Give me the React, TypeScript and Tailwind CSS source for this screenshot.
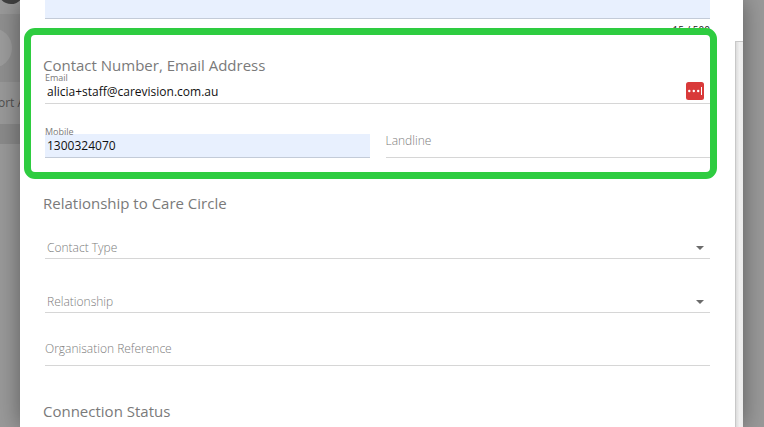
import type { ReactNode } from 'react'

const fieldClass =
  'block w-full rounded-none border-b border-[#d6d6d6] bg-transparent font-[inherit] text-[12px] text-[#111] outline-none placeholder:font-light placeholder:text-[#7c7c7c]'

const SectionTitle = ({ children }: { children: ReactNode }) => (
  <h2 className="-ml-0.5 text-[15px] leading-[15px] text-[#7a7a7a]">{children}</h2>
)

const FloatingLabel = ({ htmlFor, children }: { htmlFor: string; children: ReactNode }) => (
  <label
    htmlFor={htmlFor}
    className="relative -mb-0.5 block text-[9px] leading-[9px] text-[#7a7a7a]"
  >
    {children}
  </label>
)

const PasswordManagerIcon = () => (
  <svg viewBox="0 0 18 18" className="h-[18px] w-[18px]" aria-hidden="true">
    <rect width="18" height="18" rx="2.5" fill="#d93a3a" />
    <circle cx="3.3" cy="9" r="1.2" fill="#fff" />
    <circle cx="7.8" cy="9" r="1.2" fill="#fff" />
    <circle cx="12.2" cy="9" r="1.2" fill="#fff" />
    <rect x="15" y="5" width="1" height="8" fill="#fff" />
  </svg>
)

const SelectField = ({ id, label }: { id: string; label: string }) => (
  <div className="relative">
    <select
      id={id}
      aria-label={label}
      defaultValue=""
      className="block h-6 w-full appearance-none rounded-none border-b border-[#d6d6d6] bg-transparent pt-0.5 pl-0.5 font-[inherit] text-[12px] font-light text-[#7c7c7c] outline-none"
    >
      <option value="">{label}</option>
    </select>
    <svg
      viewBox="0 0 8 4"
      className="pointer-events-none absolute top-[11px] right-1.5 h-1 w-2"
      aria-hidden="true"
    >
      <path d="M0 0h8L4 4z" fill="#6b6b6b" />
    </svg>
  </div>
)

// Dimmed page behind the dialog
const Backdrop = () => (
  <div className="w-5 shrink-0 overflow-hidden bg-[#999] text-[12px] text-[#505050]">
    <div className="h-3.5 overflow-hidden">
      <div className="-mt-[22px] -ml-0.5 h-[26px] w-[26px] rounded-full bg-[#404040]" />
    </div>
    <div className="flex h-[68px] items-center bg-[#8f8f8f]">
      <div className="-ml-7 h-10 w-10 shrink-0 rounded-full bg-[#9c9c9c]" />
    </div>
    <div className="flex h-[42px] items-center whitespace-nowrap">
      <span className="-ml-0.5">ort A</span>
    </div>
    <div className="h-5 bg-[#8a8a8a]" />
  </div>
)

const App = () => {
  return (
    <div className="flex h-screen overflow-hidden bg-[#999] font-['Open_Sans','Noto_Sans',sans-serif]">
      <Backdrop />
      <main className="relative flex min-w-0 flex-1 bg-white shadow-[0_0_22px_rgba(0,0,0,0.4)]">
        <form className="min-w-0 flex-1 px-[25px]">
          <textarea
            aria-label="Notes"
            className="block h-[19px] w-full resize-none border-b border-[#c3cbd8] bg-[#e8f0fe] outline-none"
          />
          <div className="mt-[3px] text-right text-[10px] leading-4 text-[#222]">15 / 500</div>

          <section className="relative mt-5">
            <SectionTitle>Contact Number, Email Address</SectionTitle>
            <div className="relative">
              <FloatingLabel htmlFor="email">Email</FloatingLabel>
              <input
                id="email"
                type="email"
                defaultValue="alicia+staff@carevision.com.au"
                className={`${fieldClass} h-6 pl-0.5`}
              />
              <button
                type="button"
                aria-label="Fill from password manager"
                className="absolute right-1.5 bottom-1"
              >
                <PasswordManagerIcon />
              </button>
            </div>
            <div className="mt-[22px] grid grid-cols-2 items-end gap-4">
              <div>
                <FloatingLabel htmlFor="mobile">Mobile</FloatingLabel>
                <input
                  id="mobile"
                  type="tel"
                  defaultValue="1300324070"
                  className="block h-6 w-full rounded-none border-b border-[#c3cbd8] bg-[#e8f0fe] pl-0.5 font-[inherit] text-[12px] text-[#111] outline-none"
                />
              </div>
              <input
                type="tel"
                aria-label="Landline"
                placeholder="Landline"
                className={`${fieldClass} h-8 pb-0.5`}
              />
            </div>
            <div className="pointer-events-none absolute -top-[30px] -right-[7px] -bottom-[21px] -left-[21px] rounded-[11px] border-7 border-[#2ecc40]" />
          </section>

          <section className="mt-[38px]">
            <SectionTitle>Relationship to Care Circle</SectionTitle>
            <div className="mt-6 grid gap-[30px]">
              <SelectField id="contact-type" label="Contact Type" />
              <SelectField id="relationship" label="Relationship" />
            </div>
            <input
              type="text"
              aria-label="Organisation Reference"
              placeholder="Organisation Reference"
              className={`${fieldClass} mt-[21px] h-8 pb-0.5`}
            />
          </section>

          <section className="mt-[38px]">
            <SectionTitle>Connection Status</SectionTitle>
          </section>
        </form>
        <div className="mt-[41px] w-2 shrink-0 border-t border-l border-[#c8c8c8] bg-linear-to-r from-[#dcdcdc] via-[#f0f0f0] to-[#ececec]" />
      </main>
      <div className="w-[21px] shrink-0" />
    </div>
  )
}

export default App
